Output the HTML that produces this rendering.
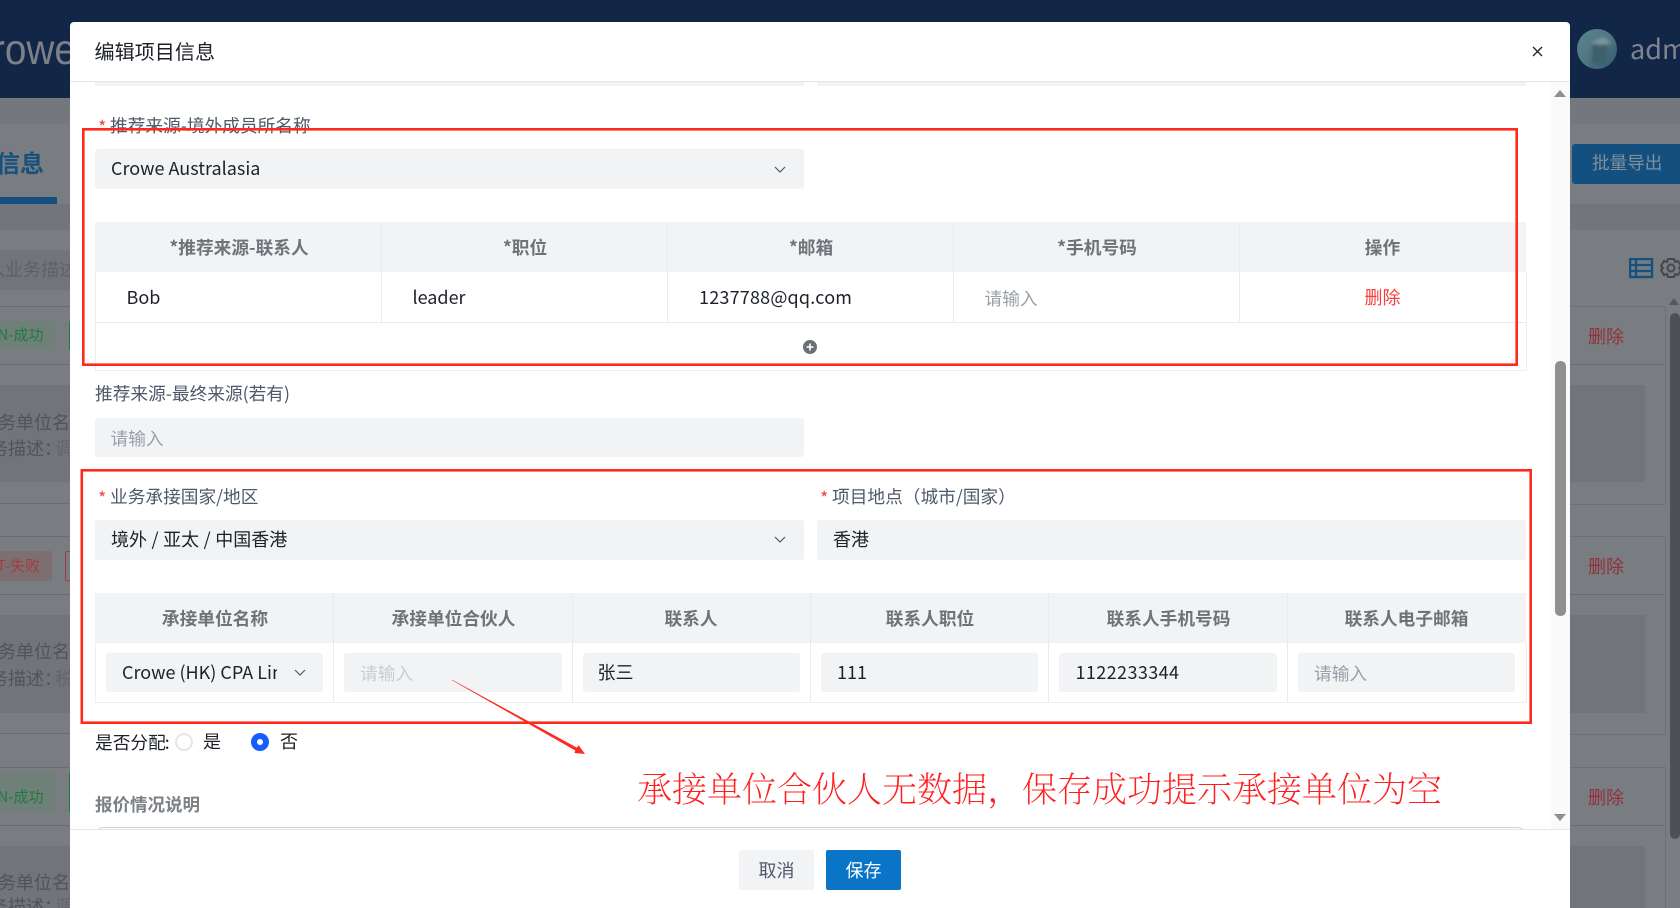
<!DOCTYPE html>
<html lang="zh"><head><meta charset="utf-8"><title>编辑项目信息</title>
<style>
html,body{margin:0;padding:0;width:1680px;height:908px;overflow:hidden;background:#797c81}
body{position:relative;font-family:"Noto Sans CJK SC","Liberation Sans",sans-serif;font-size:18px}
.a{position:absolute}
.t{position:absolute;white-space:nowrap;height:30px;line-height:30px}
.f{position:absolute;background:#f2f3f5;border-radius:3px}
.h{position:absolute;text-align:center;font-weight:700;font-size:17.7px;color:#6f7278;height:30px;line-height:30px;white-space:nowrap}
.v{position:absolute;width:1px;background:#e9eaee}
.ln{position:absolute;height:1px;background:#e9eaee}
.bl{position:absolute;height:1px;background:#696c71}
.lb{color:#4e5969;font-size:17.7px}.val{color:#1d2129}.ph{color:#9aa0a9}.s{color:#f53f3f}
</style></head><body>
<!-- background page -->
<div class="a" style="left:0;top:0;width:1680px;height:98px;background:#122747"></div>
<div class="t" style="left:-8px;top:22px;height:56px;line-height:56px;font-size:43px;color:#7b8089;font-family:'Liberation Sans',sans-serif;transform:scaleX(.9);transform-origin:left">rowe</div>
<svg class="a" style="left:1577px;top:29px" width="40" height="40"><defs><linearGradient id="g" x1="0" y1="0" x2="1" y2="1"><stop offset="0" stop-color="#5b8390"/><stop offset=".5" stop-color="#517783"/><stop offset="1" stop-color="#2e5a6c"/></linearGradient><filter id="b"><feGaussianBlur stdDeviation="1.5"/></filter><clipPath id="c"><circle cx="20" cy="20" r="20"/></clipPath></defs><g clip-path="url(#c)"><rect width="40" height="40" fill="url(#g)"/><g filter="url(#b)"><rect x="15" y="15" width="15" height="20" fill="#3c5f6e"/><path d="M13 14L26 8l9 6-11 2z" fill="#7c959c"/></g></g></svg>
<div class="t" style="left:1630px;top:29px;height:38px;line-height:38px;font-size:27px;color:#7f848e">adm</div>
<div class="a" style="left:0;top:98px;width:1680px;height:26px;background:#74777e"></div>
<div class="a" style="left:0;top:204px;width:1680px;height:26px;background:#72757c"></div>
<div class="t" style="left:-4px;top:145px;height:34px;line-height:34px;font-size:24px;font-weight:700;color:#14517f">信息</div>
<div class="a" style="left:0;top:197px;width:57px;height:7px;background:#13507f"></div>
<div class="a" style="left:0;top:250px;width:70px;height:40px;background:#71747b"></div>
<div class="t" style="left:-13px;top:254px;color:#5e6168">入业务描述</div>
<div class="bl" style="left:0;top:306px;width:70px"></div>
<div class="bl" style="left:0;top:364px;width:70px"></div>
<div class="a" style="left:0;top:321px;width:55px;height:29px;background:#6e8078;border-radius:2px"></div>
<div class="t" style="left:-2.5px;top:320px;font-size:15px;color:#1f7a42">N-成功</div>
<div class="a" style="left:69px;top:321px;width:2px;height:29px;background:#1f7a42"></div>
<div class="a" style="left:0;top:385px;width:70px;height:97px;background:#71747b"></div>
<div class="t" style="left:-2px;top:407px;color:#50535a">务单位名</div>
<div class="t" style="left:-10px;top:433px;color:#50535a">务描述：<span style="color:#63666c;margin-left:-7px">调</span></div>
<div class="bl" style="left:0;top:503px;width:70px"></div>
<div class="bl" style="left:0;top:536px;width:70px"></div>
<div class="bl" style="left:0;top:594px;width:70px"></div>
<div class="a" style="left:0;top:551px;width:52px;height:30px;background:#7d6e72;border-radius:2px"></div>
<div class="t" style="left:-3px;top:551px;font-size:15px;color:#a23d42">T-失败</div>
<div class="a" style="left:65px;top:551px;width:6px;height:28px;border:1px solid #a23d42;border-right:0;border-radius:2px 0 0 2px"></div>
<div class="a" style="left:0;top:615px;width:70px;height:98px;background:#71747b"></div>
<div class="t" style="left:-2px;top:636px;color:#50535a">务单位名</div>
<div class="t" style="left:-10px;top:663px;color:#50535a">务描述：<span style="color:#63666c;margin-left:-7px">税</span></div>
<div class="bl" style="left:0;top:733px;width:70px"></div>
<div class="bl" style="left:0;top:767px;width:70px"></div>
<div class="bl" style="left:0;top:825px;width:70px"></div>
<div class="a" style="left:0;top:773px;width:55px;height:39px;background:#6e8078;border-radius:2px"></div>
<div class="t" style="left:-2.5px;top:782px;font-size:15px;color:#1f7a42">N-成功</div>
<div class="a" style="left:69px;top:773px;width:2px;height:39px;background:#1f7a42"></div>
<div class="a" style="left:0;top:846px;width:70px;height:62px;background:#71747b"></div>
<div class="t" style="left:-2px;top:867px;color:#50535a">务单位名</div>
<div class="t" style="left:-10px;top:891px;color:#50535a">务描述：<span style="color:#63666c;margin-left:-7px">调</span></div>
<!-- right strip -->
<div class="a" style="left:1572px;top:144px;width:108px;height:40px;background:#13507f;border-radius:3px 0 0 3px"></div>
<div class="t" style="left:1592px;top:148px;font-size:17.6px;color:#80909d">批量导出</div>
<svg class="a" style="left:1629px;top:258px" width="51" height="22"><rect x="1" y="1" width="22" height="18" fill="none" stroke="#14517f" stroke-width="2.4"/><path d="M1 7h22M1 13h22M7 1v18" stroke="#14517f" stroke-width="2.2" fill="none"/><g fill="none" stroke="#45484e" stroke-width="2"><circle cx="42" cy="10" r="3.5"/><path d="M39 1h6l1 3 3-1 3 5-2 2 2 2-3 5-3-1-1 3h-6l-1-3-3 1-3-5 2-2-2-2 3-5 3 1z"/></g></svg>
<div class="a" style="left:1570px;top:306px;width:95px;height:197px;border:1px solid #6c6f75;border-left:0;border-radius:0 3px 3px 0"></div>
<div class="a" style="left:1570px;top:536px;width:95px;height:197px;border:1px solid #6c6f75;border-left:0;border-radius:0 3px 3px 0"></div>
<div class="a" style="left:1570px;top:767px;width:95px;height:160px;border:1px solid #6c6f75;border-left:0"></div>
<div class="bl" style="left:1570px;top:364px;width:95px"></div>
<div class="bl" style="left:1570px;top:594px;width:95px"></div>
<div class="bl" style="left:1570px;top:825px;width:95px"></div>
<div class="a" style="left:1570px;top:385px;width:75px;height:97px;background:#71747b"></div>
<div class="a" style="left:1570px;top:615px;width:75px;height:98px;background:#71747b"></div>
<div class="a" style="left:1570px;top:846px;width:75px;height:62px;background:#71747b"></div>
<div class="t" style="left:1588px;top:321px;color:#92303b">删除</div>
<div class="t" style="left:1588px;top:551px;color:#92303b">删除</div>
<div class="t" style="left:1588px;top:782px;color:#92303b">删除</div>
<div class="a" style="left:1669px;top:298px;width:0;height:0;border-left:5.5px solid transparent;border-right:5.5px solid transparent;border-bottom:7px solid #54575d"></div>
<div class="a" style="left:1670px;top:313px;width:10px;height:526px;background:#4d5056;border-radius:5px"></div>
<!-- modal -->
<div class="a" style="left:70px;top:22px;width:1500px;height:886px;background:#fff;border-radius:4px 4px 0 0"></div>
<div class="a" style="left:70px;top:81px;width:1500px;height:1px;background:#e5e6eb"></div>
<div class="a" style="left:95px;top:82px;width:709px;height:4px;background:#f2f3f5"></div>
<div class="a" style="left:817px;top:82px;width:709px;height:4px;background:#f2f3f5"></div>
<div class="t" style="left:94.5px;top:36px;font-size:20.1px;color:#1d2129">编辑项目信息</div>
<svg class="a" style="left:1532px;top:46px" width="11" height="11"><path d="M1 1l9 9M10 1l-9 9" stroke="#1d2129" stroke-width="1.3"/></svg>
<!-- scrollbar -->
<div class="a" style="left:1551px;top:82px;width:19px;height:747px;background:#fafafa"></div>
<div class="a" style="left:1554px;top:90px;width:0;height:0;border-left:6.5px solid transparent;border-right:6.5px solid transparent;border-bottom:7px solid #8f8f8f"></div>
<div class="a" style="left:1554px;top:814px;width:0;height:0;border-left:6.5px solid transparent;border-right:6.5px solid transparent;border-top:7px solid #8f8f8f"></div>
<div class="a" style="left:1555px;top:361px;width:11px;height:255px;background:#8f8f8f;border-radius:5px"></div>
<!-- section 1 -->
<div class="t s" style="left:98px;top:112px">*</div>
<div class="t lb" style="left:110px;top:110px">推荐来源-境外成员所名称</div>
<div class="f" style="left:95px;top:149px;width:709px;height:40px"></div>
<div class="t val" style="left:111px;top:153px">Crowe Australasia</div>
<svg class="a" style="left:774px;top:166px" width="12" height="8"><path d="M1 1l5 5 5-5" fill="none" stroke="#4e5969" stroke-width="1.2"/></svg>
<div class="a" style="left:95px;top:222px;width:1431px;height:50px;background:#f2f3f5"></div>
<div class="a" style="left:95px;top:272px;width:1430px;height:98px;border:1px solid #eceef1;border-top:0"></div>
<div class="ln" style="left:95px;top:322px;width:1431px"></div>
<div class="v" style="left:381px;top:222px;height:100px"></div>
<div class="v" style="left:667px;top:222px;height:100px"></div>
<div class="v" style="left:953px;top:222px;height:100px"></div>
<div class="v" style="left:1239px;top:222px;height:100px"></div>
<div class="h" style="left:96px;top:232px;width:286px">*推荐来源-联系人</div>
<div class="h" style="left:382px;top:232px;width:286px">*职位</div>
<div class="h" style="left:668px;top:232px;width:286px">*邮箱</div>
<div class="h" style="left:954px;top:232px;width:286px">*手机号码</div>
<div class="h" style="left:1239px;top:232px;width:287px">操作</div>
<div class="t val" style="left:126.5px;top:282px">Bob</div>
<div class="t val" style="left:412.5px;top:282px">leader</div>
<div class="t val" style="left:699px;top:282px;letter-spacing:.2px">1237788@qq.com</div>
<div class="t ph" style="left:984.5px;top:283px;font-size:17.7px">请输入</div>
<div class="t s" style="left:1364.5px;top:282px">删除</div>
<svg class="a" style="left:803px;top:340px" width="14" height="14"><circle cx="7" cy="7" r="7" fill="#6b7078"/><path d="M7 3.5v7M3.5 7h7" stroke="#fff" stroke-width="1.6"/></svg>
<div class="t lb" style="left:95px;top:378px">推荐来源-最终来源(若有)</div>
<div class="f" style="left:95px;top:418px;width:709px;height:39px"></div>
<div class="t ph" style="left:110.5px;top:423px;font-size:17.7px">请输入</div>
<!-- section 2 -->
<div class="t s" style="left:98px;top:483px">*</div>
<div class="t lb" style="left:110px;top:481px">业务承接国家/地区</div>
<div class="t s" style="left:820px;top:483px">*</div>
<div class="t lb" style="left:832px;top:481px">项目地点（城市/国家）</div>
<div class="f" style="left:95px;top:520px;width:709px;height:40px"></div>
<div class="t val" style="left:111px;top:524px;word-spacing:.5px">境外 / 亚太 / 中国香港</div>
<svg class="a" style="left:774px;top:536px" width="12" height="8"><path d="M1 1l5 5 5-5" fill="none" stroke="#4e5969" stroke-width="1.2"/></svg>
<div class="f" style="left:817px;top:520px;width:709px;height:40px"></div>
<div class="t val" style="left:833px;top:524px">香港</div>
<div class="a" style="left:95px;top:593px;width:1431px;height:50px;background:#f2f3f5"></div>
<div class="a" style="left:95px;top:643px;width:1430px;height:59px;border:1px solid #eceef1;border-top:0"></div>
<div class="v" style="left:333px;top:593px;height:109px"></div>
<div class="v" style="left:572px;top:593px;height:109px"></div>
<div class="v" style="left:810px;top:593px;height:109px"></div>
<div class="v" style="left:1048px;top:593px;height:109px"></div>
<div class="v" style="left:1287px;top:593px;height:109px"></div>
<div class="h" style="left:96px;top:603px;width:238px">承接单位名称</div>
<div class="h" style="left:334px;top:603px;width:239px">承接单位合伙人</div>
<div class="h" style="left:572px;top:603px;width:238px">联系人</div>
<div class="h" style="left:811px;top:603px;width:238px">联系人职位</div>
<div class="h" style="left:1049px;top:603px;width:239px">联系人手机号码</div>
<div class="h" style="left:1287px;top:603px;width:239px">联系人电子邮箱</div>
<div class="f" style="left:106px;top:653px;width:217px;height:39px"></div>
<div class="t val" style="left:122px;top:657px;width:155px;overflow:hidden">Crowe (HK) CPA Limited</div>
<svg class="a" style="left:294px;top:669px" width="12" height="8"><path d="M1 1l5 5 5-5" fill="none" stroke="#4e5969" stroke-width="1.2"/></svg>
<div class="f" style="left:344px;top:653px;width:218px;height:39px"></div>
<div class="t" style="left:360px;top:658px;font-size:17.7px;color:#c9cdd4">请输入</div>
<div class="f" style="left:583px;top:653px;width:217px;height:39px"></div>
<div class="t val" style="left:597.5px;top:657px">张三</div>
<div class="f" style="left:821px;top:653px;width:217px;height:39px"></div>
<div class="t val" style="left:837px;top:657px">111</div>
<div class="f" style="left:1059px;top:653px;width:218px;height:39px"></div>
<div class="t val" style="left:1075.5px;top:657px;letter-spacing:.4px">1122233344</div>
<div class="f" style="left:1298px;top:653px;width:217px;height:39px"></div>
<div class="t ph" style="left:1314px;top:658px;font-size:17.7px">请输入</div>
<!-- radios -->
<div class="t val" style="left:95px;top:727px;font-size:17.7px">是否分配<span style="margin-left:-1px">:</span></div>
<div class="a" style="left:175px;top:733px;width:14px;height:14px;border:2px solid #e5e6eb;border-radius:50%;background:#fff"></div>
<div class="t val" style="left:203px;top:726px">是</div>
<div class="a" style="left:251px;top:733px;width:18px;height:18px;border-radius:50%;background:#165dff"></div>
<div class="a" style="left:257px;top:739px;width:6px;height:6px;border-radius:50%;background:#fff"></div>
<div class="t val" style="left:280px;top:726px">否</div>
<div class="t" style="left:95px;top:790px;font-size:17.5px;font-weight:700;color:#7c8087">报价情况说明</div>
<div class="a" style="left:97px;top:827px;width:1425px;height:8px;border:1px solid #cfd1d6;border-bottom:0;border-radius:6px 6px 0 0"></div>
<!-- footer -->
<div class="a" style="left:70px;top:829px;width:1500px;height:79px;background:#fff;border-top:1px solid #e5e6eb"></div>
<div class="a" style="left:739px;top:850px;width:75px;height:40px;background:#f2f3f5;border-radius:2px;text-align:center;line-height:40px;color:#4e5969">取消</div>
<div class="a" style="left:826px;top:850px;width:75px;height:40px;background:#0a74c6;border-radius:2px;text-align:center;line-height:40px;color:#fff">保存</div>
<!-- annotations -->
<svg class="a" style="left:0;top:0;pointer-events:none" width="1680" height="908"><rect x="83.3" y="129.3" width="1433.4" height="235.4" fill="none" stroke="#ff2a1f" stroke-width="2.6"/><rect x="81.8" y="470.3" width="1448.9" height="252.4" fill="none" stroke="#ff2a1f" stroke-width="2.6"/><polygon points="451.5,680 452.5,680 576.8,747.6 578.6,745.3 585,754 574.5,753 575.3,750.5" fill="#ff2a1f"/></svg>
<div class="t" style="left:637px;top:763px;height:50px;line-height:50px;font-size:35px;color:#ff1f1f;font-family:'Noto Serif CJK SC','Liberation Serif',serif;font-weight:200">承接单位合伙人无数据，保存成功提示承接单位为空</div>
</body></html>
